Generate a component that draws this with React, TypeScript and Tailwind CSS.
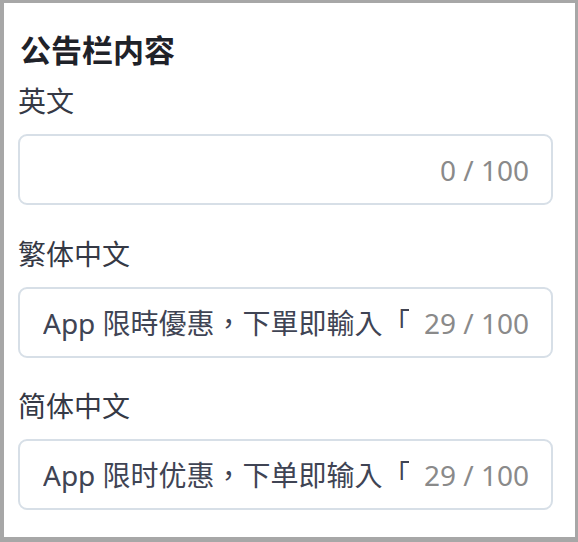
const sans = '"Noto Sans", "Noto Sans CJK SC", sans-serif';
const sansTC = '"Noto Sans", "Noto Sans CJK TC", sans-serif';

type Field = {
  label: string;
  value: string;
  font: string;
  mt: string;
};

const fields: Field[] = [
  { label: "英文", value: "", font: sans, mt: "mt-[13px]" },
  {
    label: "繁体中文",
    value: "App 限時優惠，下單即輸入「APP100」折扣碼享優惠！",
    font: sansTC,
    mt: "mt-[31px]",
  },
  {
    label: "简体中文",
    value: "App 限时优惠，下单即输入「APP100」折扣码享优惠！",
    // same full-width comma placement as the traditional row
    font: sansTC,
    mt: "mt-[30px]",
  },
];

const CountInput = ({ value, font }: { value: string; font: string }) => {
  return (
    <div className="mt-[15px] flex h-[71px] w-[535px] items-center gap-[15px] rounded-[9px] border-2 border-[#d7dfe7] bg-white pl-[23px] pr-[22px]">
      <div
        className="min-w-0 flex-1 overflow-hidden whitespace-nowrap text-[28px] leading-[36px] text-[#3f4454]"
        style={{ fontFamily: font }}
      >
        {value}
      </div>
      <span className="shrink-0 text-[28px] leading-[36px] text-[#8a8a8a]">
        {value.length} / 100
      </span>
    </div>
  );
};

const App = () => {
  return (
    <div
      className="h-[542px] w-[578px] border-b-[5px] border-l-4 border-r-[3px] border-t-[3px] border-[#a7a7a7] bg-white pl-[14px] pt-[27px]"
      style={{ fontFamily: sans }}
    >
      <h2 className="pl-[2px] text-[31px] font-bold leading-[40px] text-[#1f2229]">
        公告栏内容
      </h2>

      {fields.map((f) => (
        <div key={f.label}>
          <div className={`${f.mt} text-[28px] leading-[36px] text-[#353945]`}>
            {f.label}
          </div>
          <CountInput value={f.value} font={f.font} />
        </div>
      ))}
    </div>
  );
};

export default App;
